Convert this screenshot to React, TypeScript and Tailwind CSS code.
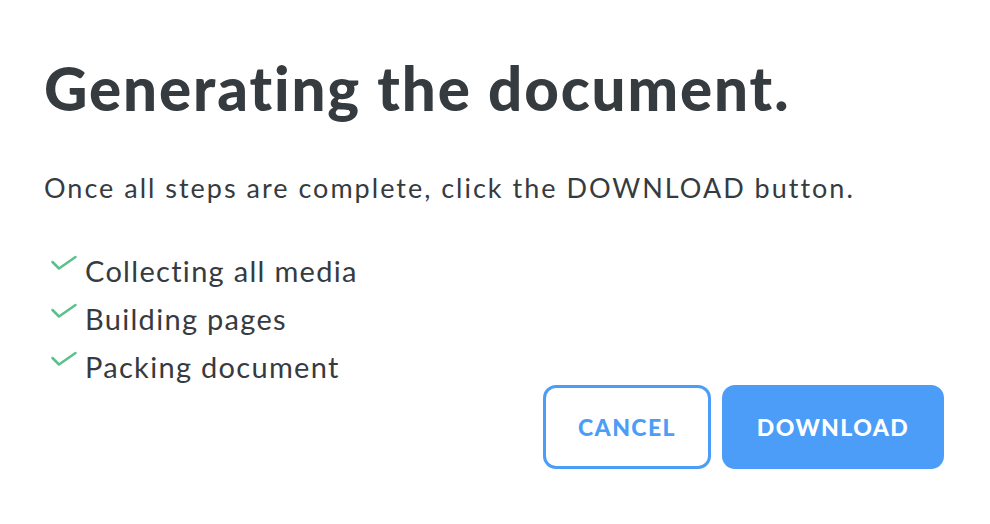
const steps = ["Collecting all media", "Building pages", "Packing document"];

function Check() {
    return (
        <svg width="28" height="17" viewBox="0 0 28 17" fill="none" className="shrink-0">
            <path d="M2.5 7 L9 13.5 L25.5 2" stroke="#5cbf8c" strokeWidth="2.5" strokeLinecap="round" strokeLinejoin="round" />
        </svg>
    );
}

export default function App() {
    return <div className="min-h-screen bg-white px-[44px] pt-[52px] text-[#363b40] font-['Lato',sans-serif]">
        <h1 className="text-[60px] leading-[72px] font-black tracking-[1.9px]">Generating the document.</h1>

        <p className="mt-[48px] text-[27px] leading-[32px] tracking-[2px]">
            Once all steps are complete, click the DOWNLOAD button.
        </p>

        <ul className="mt-[58px] flex flex-col">
            {steps.map(step => (
                <li key={step} className="flex items-start gap-[7px] h-[48px]">
                    <span className="pl-[6px] -mt-[7px]"><Check /></span>
                    <span className="text-[29px] leading-[36px] tracking-[1.3px] -mt-[9px]">{step}</span>
                </li>
            ))}
        </ul>

        <div className="-mt-[21px] flex justify-end gap-[11px] pr-[2px]">
            <button className="w-[168px] h-[84px] rounded-[13px] border-[3px] border-[#4b9df7] bg-white text-[#4b9df7] text-[23px] font-black tracking-[1.4px]">
                CANCEL
            </button>
            <button className="w-[222px] h-[84px] rounded-[13px] bg-[#4b9df7] text-white text-[23px] font-black tracking-[1.4px]">
                DOWNLOAD
            </button>
        </div>
    </div>
}
